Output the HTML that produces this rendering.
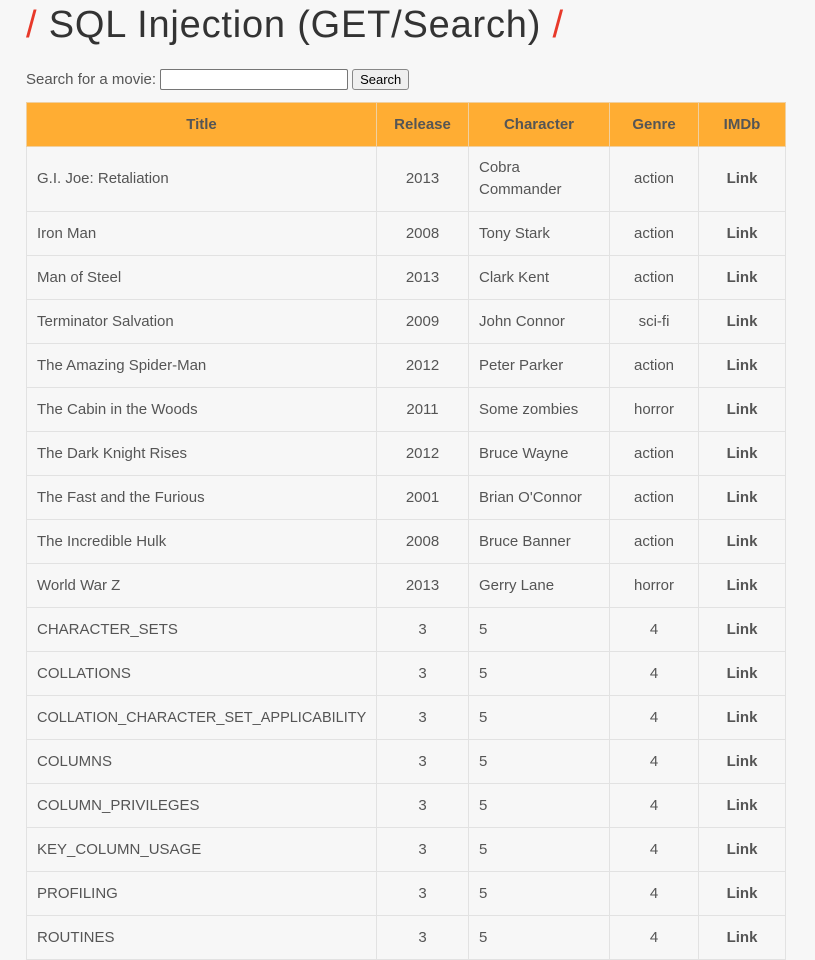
<!DOCTYPE html>
<html><head><meta charset="utf-8"><style>
body{margin:0;background:#f7f7f7;font-family:"Liberation Sans",Arial,sans-serif;color:#555;width:815px;height:916px;overflow:hidden}
h1{position:absolute;left:26px;top:0;margin:0;font-size:38px;font-weight:normal;color:#333;line-height:50px;letter-spacing:0.8px;font-family:"Comic Sans MS","Liberation Sans",sans-serif}
h1 span{color:#e8392a}
.form{position:absolute;left:26px;top:69px;font-size:15px;color:#555;display:flex;align-items:center}
.form input{width:186px;height:19px;border:1px solid #767676;border-radius:2px;margin:0 4px;padding:0;background:#fff}
.form button{font-family:"Liberation Sans",sans-serif;font-size:13px;height:21px;padding:0 7px;border:1px solid #888;border-radius:3px;background:#efefef;color:#000}
table{position:absolute;left:26px;top:102px;border-collapse:collapse;table-layout:fixed;width:759px;font-size:15px}
th{background:#ffad33;color:#555;height:43px;padding:0;border:1px solid #f0d0a0;font-weight:bold;font-size:15px}
td{border:1px solid #e2e2e2;height:43px;padding:0 10px;color:#555;line-height:22px}
td.c{text-align:center}
td.l{text-align:center;font-weight:bold}
tr.t td{height:64px}
</style></head><body>
<h1><span>/</span> SQL Injection (GET/Search) <span>/</span></h1>
<div class="form">Search for a movie: <input type="text"><button>Search</button></div>
<table>
<colgroup><col style="width:350px"><col style="width:92px"><col style="width:141px"><col style="width:89px"><col style="width:87px"></colgroup>
<tr><th>Title</th><th>Release</th><th>Character</th><th>Genre</th><th>IMDb</th></tr>
<tr class="t"><td>G.I. Joe: Retaliation</td><td class="c">2013</td><td>Cobra<br>Commander</td><td class="c">action</td><td class="l">Link</td></tr>
<tr><td>Iron Man</td><td class="c">2008</td><td>Tony Stark</td><td class="c">action</td><td class="l">Link</td></tr>
<tr><td>Man of Steel</td><td class="c">2013</td><td>Clark Kent</td><td class="c">action</td><td class="l">Link</td></tr>
<tr><td>Terminator Salvation</td><td class="c">2009</td><td>John Connor</td><td class="c">sci-fi</td><td class="l">Link</td></tr>
<tr><td>The Amazing Spider-Man</td><td class="c">2012</td><td>Peter Parker</td><td class="c">action</td><td class="l">Link</td></tr>
<tr><td>The Cabin in the Woods</td><td class="c">2011</td><td>Some zombies</td><td class="c">horror</td><td class="l">Link</td></tr>
<tr><td>The Dark Knight Rises</td><td class="c">2012</td><td>Bruce Wayne</td><td class="c">action</td><td class="l">Link</td></tr>
<tr><td>The Fast and the Furious</td><td class="c">2001</td><td>Brian O'Connor</td><td class="c">action</td><td class="l">Link</td></tr>
<tr><td>The Incredible Hulk</td><td class="c">2008</td><td>Bruce Banner</td><td class="c">action</td><td class="l">Link</td></tr>
<tr><td>World War Z</td><td class="c">2013</td><td>Gerry Lane</td><td class="c">horror</td><td class="l">Link</td></tr>
<tr><td>CHARACTER_SETS</td><td class="c">3</td><td>5</td><td class="c">4</td><td class="l">Link</td></tr>
<tr><td>COLLATIONS</td><td class="c">3</td><td>5</td><td class="c">4</td><td class="l">Link</td></tr>
<tr><td style="font-size:14.5px">COLLATION_CHARACTER_SET_APPLICABILITY</td><td class="c">3</td><td>5</td><td class="c">4</td><td class="l">Link</td></tr>
<tr><td>COLUMNS</td><td class="c">3</td><td>5</td><td class="c">4</td><td class="l">Link</td></tr>
<tr><td>COLUMN_PRIVILEGES</td><td class="c">3</td><td>5</td><td class="c">4</td><td class="l">Link</td></tr>
<tr><td>KEY_COLUMN_USAGE</td><td class="c">3</td><td>5</td><td class="c">4</td><td class="l">Link</td></tr>
<tr><td>PROFILING</td><td class="c">3</td><td>5</td><td class="c">4</td><td class="l">Link</td></tr>
<tr><td>ROUTINES</td><td class="c">3</td><td>5</td><td class="c">4</td><td class="l">Link</td></tr>
</table>
</body></html>
